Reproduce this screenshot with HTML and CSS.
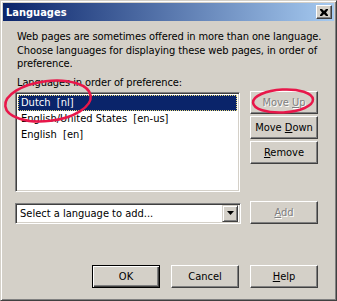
FILE: index.html
```html
<!DOCTYPE html>
<html lang="en">
<head>
  <meta charset="UTF-8" />
  <title>Languages</title>
  <link rel="stylesheet" href="styles.css">
</head>
<body>
  <div class="window">
    <div class="titlebar">
      <span class="title">Languages</span>
      <button class="close" aria-label="Close">
        <svg width="8" height="7" viewBox="0 0 8 7"><path d="M0 0h2l2 2 2-2h2v1L6 3.5 8 6v1H6L4 5 2 7H0V6l2-2.5L0 1z" fill="#000"/></svg>
      </button>
    </div>

    <div class="content">
      <p class="intro">Web pages are sometimes offered in more than one language.<br>Choose languages for displaying these web pages, in order of<br>preference.</p>
      <div class="label">Languages in order of preference:</div>

      <div class="list-row">
        <ul class="listbox">
          <li class="selected">Dutch&nbsp; [nl]</li>
          <li>English/United States&nbsp; [en-us]</li>
          <li>English&nbsp; [en]</li>
        </ul>
        <div class="side-buttons">
          <button class="btn" disabled>Move <u>U</u>p</button>
          <button class="btn">Move <u>D</u>own</button>
          <button class="btn"><u>R</u>emove</button>
        </div>
      </div>

      <div class="add-row">
        <div class="combo">
          <span class="combo-text">Select a language to add...</span>
          <span class="combo-arrow">
            <svg width="7" height="4" viewBox="0 0 7 4"><path d="M0 0h7L3.5 4z" fill="#000"/></svg>
          </span>
        </div>
        <button class="btn" disabled><u>A</u>dd</button>
      </div>

      <div class="footer">
        <button class="btn default">OK</button>
        <button class="btn">Cancel</button>
        <button class="btn"><u>H</u>elp</button>
      </div>
    </div>

    <svg class="marks" width="337" height="301" viewBox="0 0 337 301">
      <ellipse cx="47" cy="100" rx="43" ry="20" transform="rotate(-7 47 100)" />
      <ellipse cx="282" cy="100" rx="30" ry="11.5" transform="rotate(-3 282 100)" />
    </svg>
  </div>
</body>
</html>
```

FILE: styles.css
```css
:root {
  --face: #d4d0c8;
  --shadow: #808080;
  --dark: #404040;
  --navy: #0a246a;
  --font: 'DejaVu Sans Condensed', 'DejaVu Sans', sans-serif;
}

body {
  margin: 0;
  font-family: var(--font);
  font-stretch: condensed;
  font-size: 11px;
  color: #000;
  background: var(--face);
}

.window {
  position: relative;
  width: 337px;
  height: 301px;
  box-sizing: border-box;
  background: var(--face);
  border: 1px solid;
  border-color: var(--face) var(--dark) var(--dark) var(--face);
  box-shadow: inset 1px 1px 0 #fff, inset -1px -1px 0 var(--shadow);
  padding: 2px;
}

.titlebar {
  height: 18px;
  display: flex;
  align-items: center;
  justify-content: space-between;
  padding: 0 2px 0 3px;
  background: linear-gradient(to right, #0a246a, #a6caf0);
}

.title {
  color: #fff;
  font-weight: bold;
  font-size: 11px;
}

button {
  font-family: var(--font);
  font-stretch: condensed;
  font-size: 11px;
  color: #000;
  margin: 0;
  padding: 0;
  background: var(--face);
  cursor: default;
}

.close {
  width: 16px;
  height: 14px;
  display: flex;
  align-items: center;
  justify-content: center;
  border: 1px solid;
  border-color: #fff var(--dark) var(--dark) #fff;
  box-shadow: inset -1px -1px 0 var(--shadow);
}

.content {
  padding: 0 16px 0 12px;
}

.intro {
  margin: 9px 0 0 2px;
  line-height: 13.5px;
  white-space: nowrap;
  letter-spacing: -0.1px;
}

.label {
  margin: 5px 0 0 2px;
  line-height: 13px;
  letter-spacing: -0.1px;
}

.list-row {
  display: flex;
  justify-content: space-between;
  margin-top: 3px;
}

.listbox {
  list-style: none;
  margin: 0;
  padding: 0;
  width: 225px;
  height: 100px;
  box-sizing: border-box;
  background: #fff;
  border: 1px solid;
  border-color: var(--shadow) #fff #fff var(--shadow);
  box-shadow: inset 1px 1px 0 var(--dark), inset -1px -1px 0 var(--face);
  padding: 2px;
}

.listbox li {
  height: 16px;
  line-height: 16px;
  padding-left: 3px;
  white-space: nowrap;
}

.listbox li.selected {
  background: var(--navy);
  color: #fff;
  outline: 1px dotted #e8d878;
  outline-offset: -1px;
}

.side-buttons {
  display: flex;
  flex-direction: column;
  gap: 2px;
  margin-top: -1px;
}

.btn {
  width: 68px;
  height: 23px;
  box-sizing: border-box;
  border: 1px solid;
  border-color: #fff var(--dark) var(--dark) #fff;
  box-shadow: inset -1px -1px 0 var(--shadow);
}

.btn u {
  text-underline-offset: 1px;
}

.btn:disabled {
  color: var(--shadow);
  text-shadow: 1px 1px 0 #fff;
}

.btn.default {
  border-color: #000;
  box-shadow: inset 1px 1px 0 #fff, inset -1px -1px 0 var(--dark), inset -2px -2px 0 var(--shadow);
}

.add-row {
  display: flex;
  justify-content: space-between;
  align-items: flex-start;
  margin-top: 9px;
}

.combo {
  width: 226px;
  height: 21px;
  box-sizing: border-box;
  display: flex;
  align-items: center;
  justify-content: space-between;
  background: #fff;
  border: 1px solid;
  border-color: var(--shadow) #fff #fff var(--shadow);
  box-shadow: inset 1px 1px 0 var(--dark), inset -1px -1px 0 var(--face);
  padding: 2px 2px 2px 4px;
  margin-top: 2px;
}

.combo-arrow {
  width: 16px;
  height: 17px;
  box-sizing: border-box;
  display: flex;
  align-items: center;
  justify-content: center;
  background: var(--face);
  border: 1px solid;
  border-color: var(--face) var(--dark) var(--dark) var(--face);
  box-shadow: inset 1px 1px 0 #fff, inset -1px -1px 0 var(--shadow);
}

.footer {
  display: flex;
  justify-content: flex-end;
  gap: 11px;
  margin-top: 41px;
}

.marks {
  position: absolute;
  left: 0;
  top: 0;
  pointer-events: none;
}

.marks ellipse {
  fill: none;
  stroke: #e8174a;
  stroke-width: 2.5;
}
```
